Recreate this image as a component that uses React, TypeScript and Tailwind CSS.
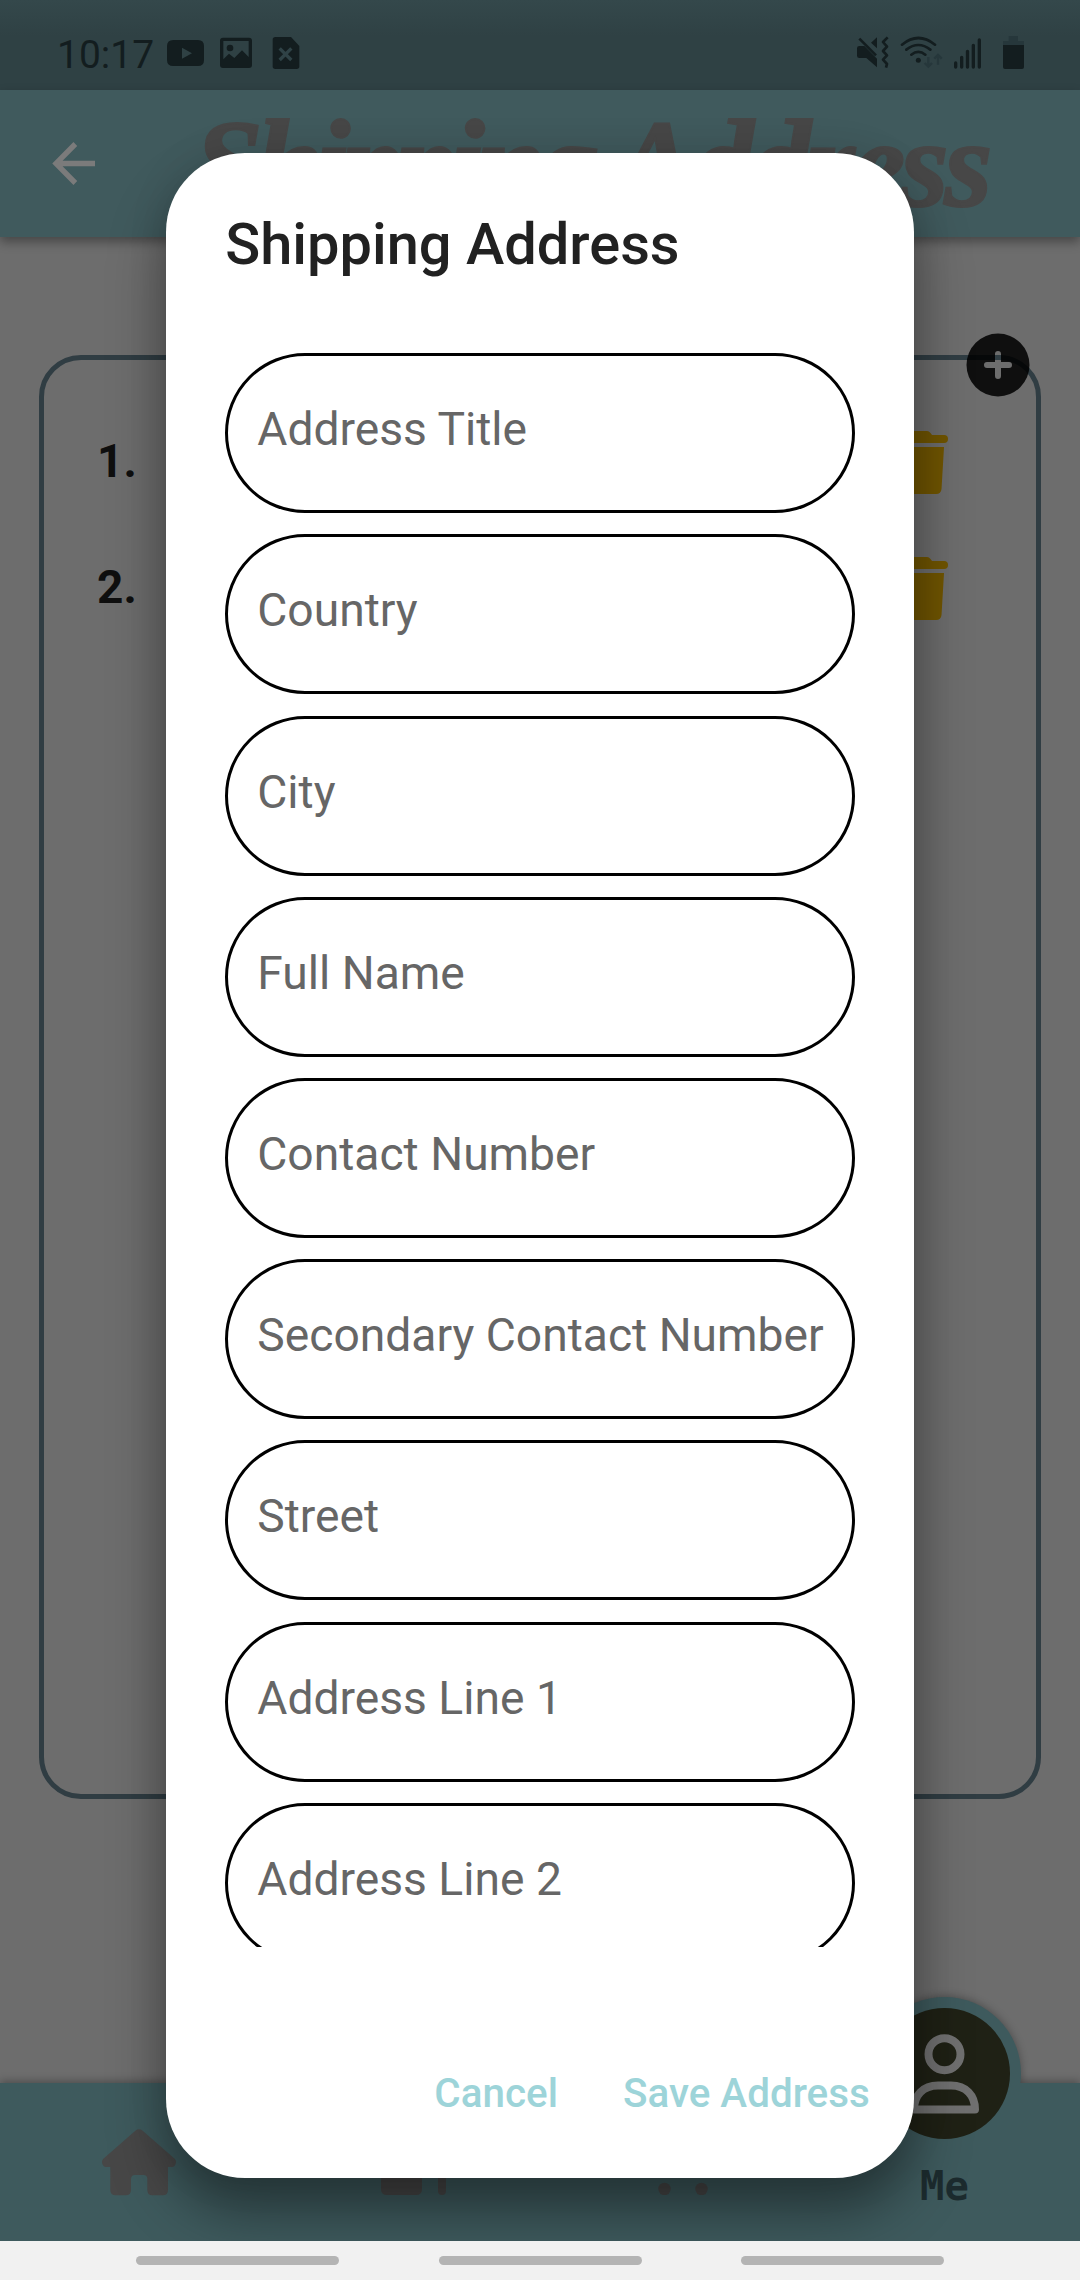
import React from "react";

const fields = [
  "Address Title",
  "Country",
  "City",
  "Full Name",
  "Contact Number",
  "Secondary Contact Number",
  "Street",
  "Address Line 1",
  "Address Line 2",
];

function StatusBar() {
  return (
    <div className="flex h-[90px] shrink-0 items-start bg-[#314346] bg-linear-to-b from-[#34484b] to-[#2f4144] to-40% text-[#131d1f]">
      <span className="ml-[57px] mt-[32px] w-[110px] text-[39px] leading-[46px]">10:17</span>
      <svg className="mt-9 h-[34px] w-[134px]" viewBox="501 108 402 102" fill="currentColor">
        <path fillRule="evenodd" d="M520 120H594Q612 120 612 138V180Q612 198 594 198H520Q501 198 501 180V138Q501 120 520 120ZM546 143V176L576 159.500Z" />
        <path fillRule="evenodd" d="M669 113H747Q756 113 756 122V195Q756 204 747 204H669Q660 204 660 195V122Q660 113 669 113ZM670 123V178L687 161L703 174L726 151L746 171V123Z" />
        <circle cx="690" cy="144" r="10" />
        <path d="M826 111H873L898 138V199Q898 207 890 207H826Q818 207 818 199V119Q818 111 826 111Z" />
        <path d="M839 145L874 180M874 145L839 180" stroke="#2f4246" strokeWidth="10" />
      </svg>
      <svg className="ml-[556px] mt-[35px] h-[35px] w-[168px]" viewBox="231 105 504 105" fill="none" stroke="currentColor">
        <path d="M238 138H253L291 176V202L259 174H238Q231 174 231 167V145Q231 138 238 138ZM291 112V145L273 128Z" fill="currentColor" stroke="none" />
        <path d="M238 116L288 166" strokeWidth="8" />
        <path d="M323 112L309 126L321 140L309 153L321 166L309 179L321 192L318 203" strokeWidth="8" strokeLinejoin="round" />
        <path d="M366 134Q415 94 465 134M379 149Q415 121 451 149M394 164Q415 147 436 164" strokeWidth="8" strokeLinecap="round" />
        <circle cx="415" cy="181" r="7.500" fill="currentColor" stroke="none" />
        <path d="M445 171V198M434 189L445 200L456 189M474 194V167M463 176L474 165L485 176" stroke="#26373b" strokeWidth="7" />
        <path d="M527 189V201M545 172V201M562.500 154V201M580 136V201M598 120V201" strokeWidth="10" strokeLinecap="round" />
        <path d="M686 108H714V123H732V140H669V123H686Z" fill="#26373b" stroke="none" />
        <path d="M669 135H732V201Q732 207 726 207H675Q669 207 669 201Z" fill="currentColor" stroke="none" />
      </svg>
    </div>
  );
}

function Header() {
  return (
    <header className="relative z-10 flex h-[147px] shrink-0 items-start bg-[#405a5d] shadow-[0_5px_10px_rgba(0,0,0,0.35)]">
      <svg className="ml-[52px] mt-[52px] h-[43px] w-[44px]" viewBox="156 426 132 129" fill="none" stroke="#7b7b7b" strokeWidth="16">
        <path d="M285 490.500H168M226 432L168 490.500L226 549" />
      </svg>
      <h1 className="ml-[98px] mt-[4px] whitespace-nowrap font-['Liberation_Serif',serif] text-[124px] font-bold italic leading-[142px] tracking-[-4.6px] text-[#474747] [-webkit-text-stroke:2px_#474747]">
        <span className="tracking-[-8px]">Shipping</span> Address
      </h1>
    </header>
  );
}

function TrashIcon() {
  return (
    <svg className="h-[63px] w-[56px]" viewBox="0 0 56 63" fill="#705500">
      <path d="M21 0H35Q37 0 38.500 2L40 4H52Q56 4 56 8Q56 12 52 12H4Q0 12 0 8Q0 4 4 4H16L17.500 2Q19 0 21 0ZM4 16H52L49.500 58Q49 63 44 63H12Q7 63 6.500 58Z" />
    </svg>
  );
}

function AddressList() {
  return (
    <main className="flex-1 px-[39px] pt-[118px]">
      <section className="relative h-[1444px] rounded-[42px] border-[5.500px] border-[#303d43] pl-[53px] pr-[88px] pt-[71px]">
        {["1.", "2."].map((n) => (
          <div key={n} className="flex h-[126px] items-start justify-between">
            <span className="mt-[3px] text-[46px] font-bold leading-[54px] text-[#0f0f0f]">{n}</span>
            <TrashIcon />
          </div>
        ))}
        <button className="absolute right-[6px] top-[-27px] h-[64px] w-[64px]" aria-label="Add address">
          <svg viewBox="0 0 64 64">
            <path fill="#000" fillOpacity=".86" fillRule="evenodd" d="M32 .5A31.500 31.500 0 1 0 32 63.500A31.500 31.500 0 1 0 32 .5ZM32 18Q35 18 35 21V29H43Q46 29 46 32Q46 35 43 35H35V43Q35 46 32 46Q29 46 29 43V35H21Q18 35 18 32Q18 29 21 29H29V21Q29 18 32 18Z" />
          </svg>
        </button>
      </section>
    </main>
  );
}

function BottomNav() {
  return (
    <nav className="relative flex h-[158px] shrink-0 items-start bg-[#3e5a5d] shadow-[0_-2px_8px_rgba(0,0,0,0.3)]">
      <svg className="ml-[102px] mt-[46px] h-[67px] w-[74px]" viewBox="306 268 222 199" fill="#474747">
        <path d="M406 272Q417 264 428 272L524 356Q530 362 527 371Q524 381 514 381H504V450Q504 466 488 466H457Q442 466 442 450V417Q442 405 430 405H405Q393 405 393 417V450Q393 466 377 466H347Q331 466 331 450V381H320Q310 381 307 371Q304 362 310 356Z" />
      </svg>
      <svg className="ml-[205px] mt-[46px] h-[66px] w-[66px]" viewBox="0 0 66 66" fill="#474747">
        <path d="M0 0H41V60Q41 66 35 66H6Q0 66 0 60ZM57 0H65V62Q65 66 61 66Q57 66 57 62Z" />
      </svg>
      <svg className="ml-[211px] mt-[46px] h-[66px] w-[50px]" viewBox="0 0 50 66" fill="#474747">
        <circle cx="6.500" cy="60" r="6.200" />
        <circle cx="43.500" cy="60" r="6.200" />
      </svg>
      <div className="absolute left-[868px] top-[-86px] flex w-[153px] flex-col items-center">
        <div className="flex h-[153px] w-[153px] items-center justify-center rounded-full bg-[#3e5a5d] shadow-[0_-1px_8px_rgba(0,0,0,0.3)] [clip-path:inset(-20px_-20px_67px_-20px)]" />
        <div className="absolute top-[10.500px] h-[131px] w-[131px] rounded-full bg-[#1f2115]">
          <svg viewBox="879 2007.500 131 131" fill="none" stroke="#707070" strokeWidth="8">
            <circle cx="944.500" cy="2053.700" r="16" />
            <path d="M914 2109C914 2095 923 2085 938 2085H951C966 2085 975 2095 975 2109Z" strokeLinejoin="round" />
          </svg>
        </div>
        <span className="mt-[12px] font-['DejaVu_Sans_Mono',monospace] text-[40.500px] font-bold leading-[48px] text-[#1c2b2e]">Me</span>
      </div>
    </nav>
  );
}

function AddressDialog() {
  return (
    <div
      role="dialog"
      className="absolute left-[166.300px] top-[153.200px] z-20 flex h-[2025px] w-[747.500px] flex-col rounded-[79px] bg-white px-[59px] shadow-[0_34px_56px_rgba(0,0,0,0.4),0_0_40px_rgba(0,0,0,0.1)]"
    >
      <h2 className="mt-[57px] whitespace-nowrap text-[57.750px] font-medium leading-[68px] text-[#212121]">
        Shipping Address
      </h2>
      <div className="mt-[75px] flex h-[1594px] flex-col gap-[21.200px] overflow-hidden">
        {fields.map((f) => (
          <div key={f} className="h-[160px] shrink-0 rounded-full border-[3px] border-black pl-[29px] pt-[45px]">
            <span className="block whitespace-nowrap text-[46.200px] leading-[56px] text-[#666]">{f}</span>
          </div>
        ))}
      </div>
      <div className="mr-[-15px] mt-[123px] flex justify-end gap-[65px] whitespace-nowrap text-[40.400px] font-medium leading-[48px] text-[#9dd4d9]">
        <button>Cancel</button>
        <button>Save Address</button>
      </div>
    </div>
  );
}

export default function App() {
  return (
    <div className="relative flex h-[2280px] w-[1080px] flex-col overflow-hidden bg-[#6d6d6d] font-[Roboto,sans-serif]">
      <StatusBar />
      <Header />
      <AddressList />
      <BottomNav />
      <AddressDialog />
      <div className="relative z-30 flex h-[39px] shrink-0 gap-[99.500px] bg-[#f1f1f1] pl-[136px] pt-[15px]">
        {[0, 1, 2].map((i) => (
          <span key={i} className="h-[9px] w-[203px] rounded-full bg-[#b4b4b4]" />
        ))}
      </div>
    </div>
  );
}
